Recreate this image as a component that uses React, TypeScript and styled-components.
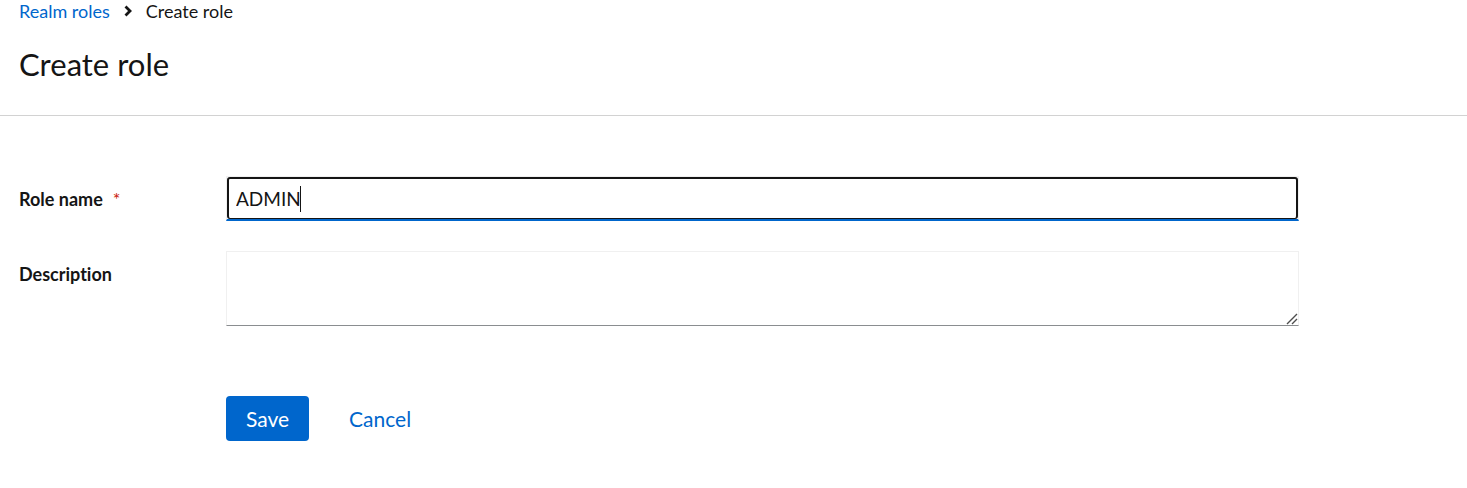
import React, { useState } from "react";
import styled, { createGlobalStyle } from "styled-components";

const GlobalStyle = createGlobalStyle`
  *, *::before, *::after { box-sizing: border-box; }
  body {
    margin: 0;
    background: #fff;
    color: #151515;
    font-family: Lato, "Open Sans", sans-serif;
    font-size: 18px;
    line-height: 24px;
    font-variant-ligatures: none;
  }
`;

const PageHeader = styled.header`
  padding: 0 19px 34px;
  border-bottom: 1px solid #d2d2d2;
`;

const Trail = styled.ol`
  display: flex;
  align-items: center;
  margin: 0 0 26px;
  padding: 0;
  list-style: none;
  line-height: 22px;
`;

const Crumb = styled.li`
  display: flex;
  align-items: center;
`;

const CrumbLink = styled.a`
  color: #06c;
  text-decoration: none;
`;

const Separator = styled.svg`
  width: 8px;
  height: 12px;
  margin: 0 14px;
`;

const Title = styled.h1`
  margin: 0;
  font-size: 31px;
  font-weight: 400;
  line-height: 33px;
`;

const Form = styled.form`
  display: grid;
  gap: 30px;
  max-width: 1318px;
  padding: 60px 19px 47px;
`;

const FormRow = styled.div`
  display: grid;
  grid-template-columns: 207px minmax(0, 1fr);
`;

const Label = styled.label`
  padding-top: 11px;
  font-weight: 700;
`;

const Required = styled.span`
  margin-left: 10px;
  color: #c9190b;
  font-weight: 400;
`;

const InputFrame = styled.div`
  position: relative;
  border: 1px solid #f0f0f0;
  border-bottom: 2px solid #06c;
`;

const TextInput = styled.input`
  display: block;
  width: 100%;
  height: 42px;
  padding: 0 7px;
  border: 2px solid #151515;
  border-bottom-width: 1px;
  border-radius: 3px;
  outline: none;
  background: #fff;
  color: #151515;
  caret-color: transparent;
  font: inherit;
  font-size: 19px;
`;

const Caret = styled.span`
  position: absolute;
  top: 9px;
  left: 73px;
  width: 1px;
  height: 26px;
  background: #151515;
  pointer-events: none;
`;

const TextAreaFrame = styled.div`
  position: relative;
`;

const TextArea = styled.textarea`
  display: block;
  width: 100%;
  height: 75px;
  padding: 6px 10px;
  border: 1px solid #f0f0f0;
  border-bottom-color: #8a8d90;
  outline: none;
  resize: vertical;
  background: #fff;
  color: #151515;
  font: inherit;
  font-size: 19px;
`;

const ResizeGrip = styled.svg`
  position: absolute;
  right: 1px;
  bottom: 1px;
  width: 12px;
  height: 12px;
  background: #fff;
  pointer-events: none;
`;

const Actions = styled.div`
  display: flex;
  gap: 20px;
  margin: 40px 0 0 207px;
`;

const Button = styled.button<{ $primary?: boolean }>`
  height: 45px;
  padding: 0 20px;
  border: 0;
  border-radius: 4px;
  background: ${(p) => (p.$primary ? "#06c" : "transparent")};
  color: ${(p) => (p.$primary ? "#fff" : "#06c")};
  font: inherit;
  font-size: 21px;
  cursor: pointer;
`;

export default function App() {
  const [name, setName] = useState("ADMIN");
  const [description, setDescription] = useState("");

  return (
    <>
      <GlobalStyle />
      <PageHeader>
        <nav aria-label="Breadcrumb">
          <Trail>
            <Crumb>
              <CrumbLink href="#roles">Realm roles</CrumbLink>
            </Crumb>
            <Crumb>
              <Separator viewBox="0 0 8 12" aria-hidden="true">
                <path d="M1.5 1.5 6 6 1.5 10.5" fill="none" stroke="#151515" strokeWidth="2.8" />
              </Separator>
              <span aria-current="page">Create role</span>
            </Crumb>
          </Trail>
        </nav>
        <Title>Create role</Title>
      </PageHeader>
      <main>
        <Form onSubmit={(e) => e.preventDefault()}>
          <FormRow>
            <Label htmlFor="role-name">
              Role name<Required aria-hidden="true">*</Required>
            </Label>
            <InputFrame>
              <TextInput
                id="role-name"
                type="text"
                required
                value={name}
                onChange={(e) => setName(e.target.value)}
              />
              <Caret />
            </InputFrame>
          </FormRow>
          <FormRow>
            <Label htmlFor="role-description">Description</Label>
            <TextAreaFrame>
              <TextArea
                id="role-description"
                value={description}
                onChange={(e) => setDescription(e.target.value)}
              />
              <ResizeGrip viewBox="0 0 12 12" aria-hidden="true">
                <path d="M1 11 11 1M6 11 11 6" fill="none" stroke="#4d4d4d" strokeWidth="1.4" />
              </ResizeGrip>
            </TextAreaFrame>
          </FormRow>
          <Actions>
            <Button type="submit" $primary>
              Save
            </Button>
            <Button type="button">Cancel</Button>
          </Actions>
        </Form>
      </main>
    </>
  );
}
